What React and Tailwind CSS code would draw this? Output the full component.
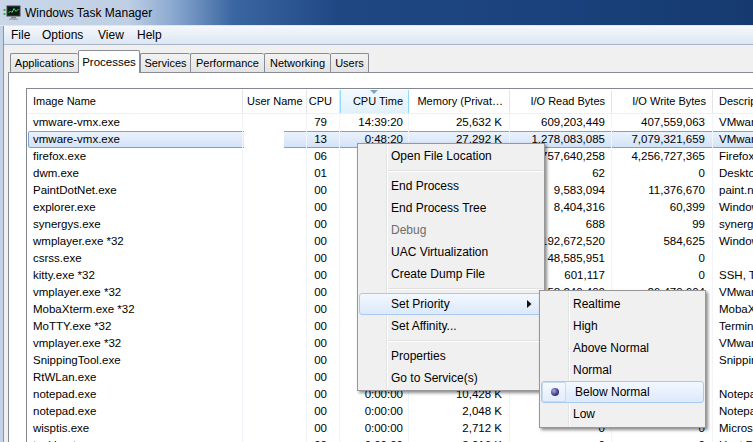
import React from "react";

const rows = [
  ["vmware-vmx.exe", "79", "14:39:20", "25,632 K", "609,203,449", "407,559,063", "VMware Workstation VMX"],
  ["vmware-vmx.exe", "13", "0:48:20", "27,292 K", "1,278,083,085", "7,079,321,659", "VMware Workstation VMX"],
  ["firefox.exe", "06", "1:12:44", "412,880 K", "1,757,640,258", "4,256,727,365", "Firefox"],
  ["dwm.exe", "01", "0:20:11", "31,204 K", "62", "0", "Desktop Window Manager"],
  ["PaintDotNet.exe", "00", "0:02:13", "88,412 K", "9,583,094", "11,376,670", "paint.net"],
  ["explorer.exe", "00", "0:04:51", "45,120 K", "8,404,316", "60,399", "Windows Explorer"],
  ["synergys.exe", "00", "0:01:02", "3,412 K", "688", "99", "synergys"],
  ["wmplayer.exe *32", "00", "0:00:41", "21,880 K", "192,672,520", "584,625", "Windows Media Player"],
  ["csrss.exe", "00", "0:01:17", "2,904 K", "48,585,951", "0", ""],
  ["kitty.exe *32", "00", "0:00:12", "4,236 K", "601,117", "0", "SSH, Telnet and Rlogin client"],
  ["vmplayer.exe *32", "00", "0:00:09", "12,332 K", "58,240,400", "26,470,604", "VMware Player"],
  ["MobaXterm.exe *32", "00", "0:00:20", "18,400 K", "3,121,455", "1,204,320", "MobaXterm"],
  ["MoTTY.exe *32", "00", "0:00:03", "2,116 K", "412,330", "20,114", "Terminal"],
  ["vmplayer.exe *32", "00", "0:00:05", "9,804 K", "21,336,120", "8,840,212", "VMware Player"],
  ["SnippingTool.exe", "00", "0:00:01", "6,220 K", "1,204,408", "220,116", "Snipping Tool"],
  ["RtWLan.exe", "00", "0:00:00", "1,880 K", "12,448", "0", ""],
  ["notepad.exe", "00", "0:00:00", "10,428 K", "5,120", "0", "Notepad"],
  ["notepad.exe", "00", "0:00:00", "2,048 K", "1,024", "0", "Notepad"],
  ["wisptis.exe", "00", "0:00:00", "2,712 K", "0", "0", "Microsoft Pen and Touch Input Component"],
  ["taskhost.exe", "00", "0:00:00", "3,016 K", "0", "0", "Host Process for Windows Tasks"],
];

const cols = "grid grid-cols-[216px_64px_33px_69px_101px_102px_101px_200px]";

function AppIcon() {
  return (
    <svg width="18" height="15" viewBox="0 0 18 15">
      <rect x="0.5" y="4" width="2" height="2" fill="#3cb44a" />
      <rect x="0.5" y="8" width="2" height="2" fill="#3cb44a" />
      <rect x="3.5" y="0.5" width="14" height="11" rx="1" fill="#2a2f36" stroke="#8a9099" />
      <rect x="5" y="2" width="11" height="8" fill="#0b1a14" />
      <polyline points="5.5,8 7.5,6 9,7.5 11,3.5 13,6.5 15.5,4" fill="none" stroke="#3fe05a" strokeWidth="1" />
      <rect x="8" y="12" width="5" height="1.5" fill="#7d848e" />
      <rect x="6" y="13.5" width="9" height="1.5" fill="#a2a8b0" />
    </svg>
  );
}

function Tab({ label, width, active, last }) {
  if (active) {
    return (
      <div
        className="relative z-10 -mb-px flex h-[23px] items-start justify-center whitespace-nowrap rounded-t-[2px] border border-b-0 border-[#898c95] bg-white pt-[3px] text-[11.5px]"
        style={{ width }}
      >
        {label}
      </div>
    );
  }
  return (
    <div
      className={`flex h-[19px] items-center justify-center whitespace-nowrap rounded-t-[2px] border border-b-0 border-[#898c95] bg-[linear-gradient(#f3f3f3,#e3e3e3)] text-[11px] ${last ? "" : "border-r-0"}`}
      style={{ width }}
    >
      {label}
    </div>
  );
}

function MenuItem({ children, disabled, hot, arrow }) {
  return (
    <div
      className={`relative flex h-[22px] items-center pl-[32px] ${disabled ? "text-[#6d6d6d]" : "text-black"}`}
    >
      {hot && (
        <div className="absolute inset-0 rounded-[3px] border border-[#a9c9f0] bg-[linear-gradient(#f3f8fe,#dbe9fb)]" />
      )}
      <span className="relative whitespace-nowrap">{children}</span>
      {arrow && (
        <svg className="absolute right-[11px] top-[7px]" width="5" height="8" viewBox="0 0 5 8">
          <polygon points="0,0 4.5,4 0,8" fill="#111" />
        </svg>
      )}
    </div>
  );
}

function Sep() {
  return (
    <div className="flex h-[8px] items-center pl-[28px]">
      <div className="h-[2px] w-full border-y border-t-[#e0e0e0] border-b-white" />
    </div>
  );
}

export default function App() {
  return (
    <div className="relative flex h-[442px] w-[753px] flex-col overflow-hidden bg-[#f0f0f0] font-['Liberation_Sans',Arial,sans-serif] text-[12px] text-black">
      {/* title bar */}
      <div className="flex h-[25px] shrink-0 items-center gap-[4px] bg-[linear-gradient(to_right,#c9d7e9_0%,#bfcfe4_17%,#8aa8cf_23%,#3a66a2_31%,#1f4883_45%,#1a417b_75%,#163a70_100%)] pl-[3px]">
        <AppIcon />
        <span className="text-[12px] text-black">Windows Task Manager</span>
      </div>
      <div className="h-[1px] shrink-0 bg-[#dfe7f2]" />

      <div className="flex min-h-0 flex-1">
        {/* left frame */}
        <div className="w-[3px] shrink-0 bg-[#c3d2e6]" />
        <div className="w-[1px] shrink-0 bg-[#8796ad]" />

        <div className="flex min-w-0 flex-1 flex-col">
          {/* menu bar */}
          <div className="flex h-[19px] shrink-0 items-center border-b border-[#a7b6cb] bg-[linear-gradient(#f5f8fc,#dde6f2)] pl-[7px]">
            <span className="w-[31px]">File</span>
            <span className="w-[56px]">Options</span>
            <span className="w-[39px]">View</span>
            <span>Help</span>
          </div>

          {/* tabs */}
          <div className="flex h-[27px] shrink-0 items-end pl-[6px]">
            <Tab label="Applications" width={68} />
            <Tab label="Processes" width={62} active />
            <Tab label="Services" width={50} />
            <Tab label="Performance" width={74} />
            <Tab label="Networking" width={66} />
            <Tab label="Users" width={39} last />
          </div>

          {/* tab page */}
          <div className="ml-[4px] flex min-h-0 flex-1 flex-col border-l border-t border-[#898c95] bg-white pl-[17px] pt-[15px]">
            <div className="flex min-h-0 flex-1 flex-col border-l border-t border-[#828790] text-[11.5px]">
              {/* header */}
              <div className={`${cols} h-[25px] shrink-0 whitespace-nowrap border-b border-[#eef0f3] pt-[1px] text-[11px]`}>
                <div className="flex items-center border-r border-[#e3e5e8] pl-[6px]">Image Name</div>
                <div className="flex items-center overflow-hidden border-r border-[#e3e5e8] pl-[4px]">User Name</div>
                <div className="flex items-center justify-end border-r border-[#e3e5e8] pr-[7px]">CPU</div>
                <div className="relative flex items-center justify-end border-x border-[#96d9f9] bg-[linear-gradient(#f2f9fe,#e1f1fb)] pr-[5px]">
                  <svg className="absolute left-[29px] top-[0px]" width="8" height="4" viewBox="0 0 8 4">
                    <polygon points="0,0 8,0 4,4" fill="#7fa4c8" />
                  </svg>
                  CPU Time
                </div>
                <div className="flex items-center justify-end border-r border-[#e3e5e8] pr-[6px]">Memory (Privat…</div>
                <div className="flex items-center justify-end border-r border-[#e3e5e8] pr-[6px]">I/O Read Bytes</div>
                <div className="flex items-center justify-end border-r border-[#e3e5e8] pr-[6px]">I/O Write Bytes</div>
                <div className="flex items-center pl-[6px]">Description</div>
              </div>

              {/* rows */}
              <div className="flex flex-col">
                {rows.map((r, i) => (
                  <div key={i} className={`${cols} relative h-[17px] shrink-0 whitespace-nowrap`}>
                    {i === 1 && (
                      <>
                        <div className="absolute inset-y-0 left-[1px] right-[-40px] rounded-[2px] border border-[#7da2ce] bg-[linear-gradient(#eaf2fc,#d3e3f7)]" />
                        <div className="absolute inset-y-0 left-[217px] w-[40px] bg-white" />
                      </>
                    )}
                    <div className="relative flex items-center border-r border-[#f1f4f9] pl-[6px]">{r[0]}</div>
                    <div className="relative border-r border-[#f1f4f9]" />
                    <div className="relative flex items-center justify-end border-r border-[#f1f4f9] pr-[12px]">{r[1]}</div>
                    <div className="relative flex items-center justify-end border-r border-[#f1f4f9] pr-[5px]">{r[2]}</div>
                    <div className="relative flex items-center justify-end border-r border-[#f1f4f9] pr-[7px]">{r[3]}</div>
                    <div className="relative flex items-center justify-end border-r border-[#f1f4f9] pr-[6px]">{r[4]}</div>
                    <div className="relative flex items-center justify-end border-r border-[#f1f4f9] pr-[7px]">{r[5]}</div>
                    <div className="relative flex items-center overflow-hidden pl-[6px]">{r[6]}</div>
                  </div>
                ))}
              </div>
            </div>
          </div>
        </div>
      </div>

      {/* context menu */}
      <div className="absolute left-[357px] top-[143px] w-[188px] border border-[#979797] bg-[#f0f0f0] p-[1px] text-[12px] shadow-[2px_2px_3px_rgba(0,0,0,0.45)]">
        <div className="absolute bottom-[1px] left-[28px] top-[1px] w-[2px] border-x border-l-[#e2e3e3] border-r-white" />
        <MenuItem>Open File Location</MenuItem>
        <Sep />
        <MenuItem>End Process</MenuItem>
        <MenuItem>End Process Tree</MenuItem>
        <MenuItem disabled>Debug</MenuItem>
        <MenuItem>UAC Virtualization</MenuItem>
        <MenuItem>Create Dump File</MenuItem>
        <Sep />
        <MenuItem hot arrow>Set Priority</MenuItem>
        <MenuItem>Set Affinity...</MenuItem>
        <Sep />
        <MenuItem>Properties</MenuItem>
        <MenuItem>Go to Service(s)</MenuItem>
      </div>

      {/* priority submenu */}
      <div className="absolute left-[539px] top-[290px] w-[167px] border border-[#979797] bg-[#f0f0f0] px-[1px] py-[2px] text-[12px] shadow-[2px_2px_3px_rgba(0,0,0,0.45)]">
        <div className="absolute bottom-[1px] left-[28px] top-[1px] w-[2px] border-x border-l-[#e2e3e3] border-r-white" />
        <MenuItem>Realtime</MenuItem>
        <MenuItem>High</MenuItem>
        <MenuItem>Above Normal</MenuItem>
        <MenuItem>Normal</MenuItem>
        <div className="relative flex h-[22px] items-center pl-[34px]">
          <div className="absolute inset-0 rounded-[3px] border border-[#a9c9f0] bg-[linear-gradient(#f3f8fe,#dbe9fb)]" />
          <div className="absolute left-[1px] top-[1px] h-[20px] w-[24px] rounded-[2px] border border-[#c7dbf4] bg-[linear-gradient(#f6f9fe,#e3edfb)]" />
          <div className="absolute left-[10px] top-[7px] h-[8px] w-[8px] rounded-full bg-[radial-gradient(circle_at_35%_35%,#a9a9e0,#3b3b8c_60%,#23235e)]" />
          <span className="relative">Below Normal</span>
        </div>
        <MenuItem>Low</MenuItem>
      </div>
    </div>
  );
}
